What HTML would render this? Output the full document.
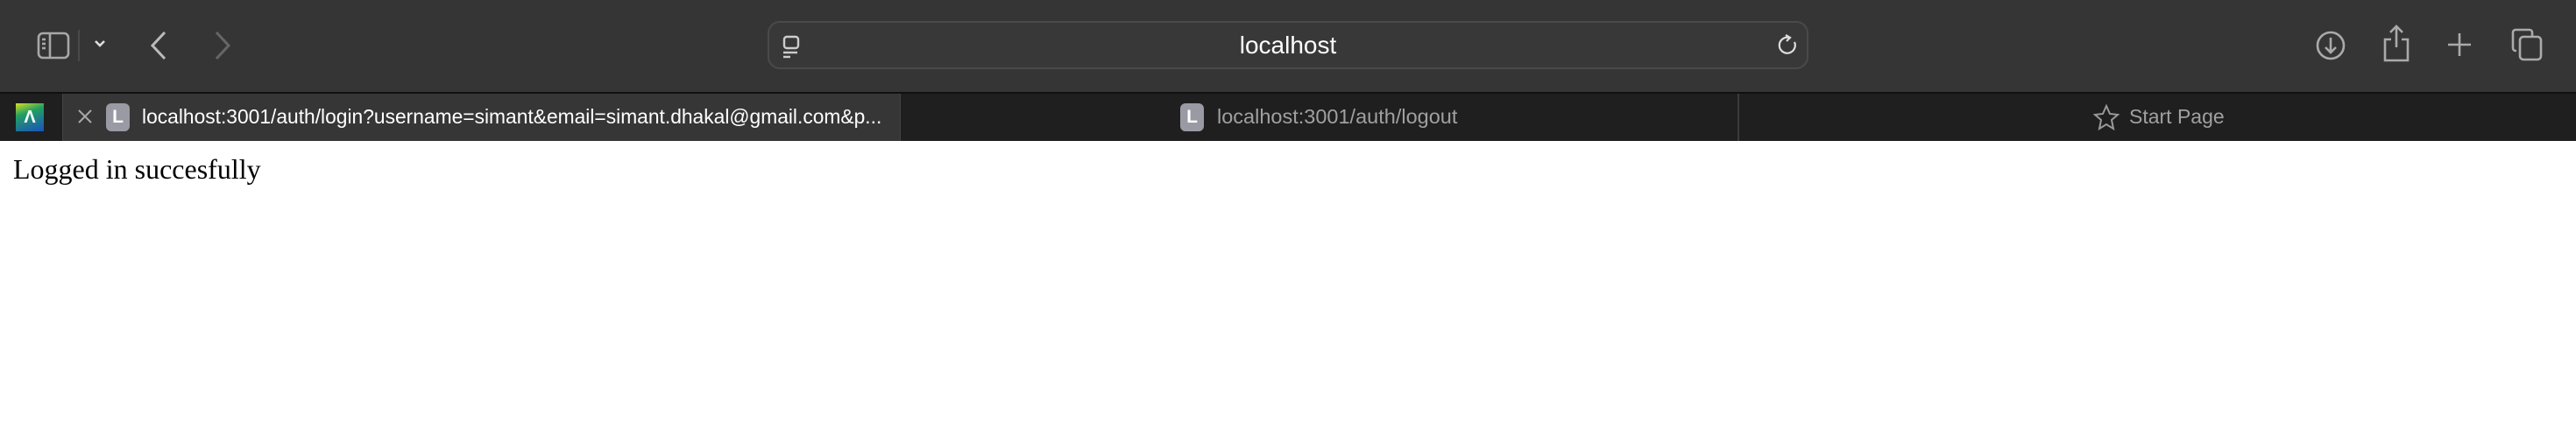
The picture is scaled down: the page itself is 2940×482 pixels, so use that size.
<!DOCTYPE html>
<html><head><meta charset="utf-8"><style>
*{margin:0;padding:0;box-sizing:border-box}
body{width:2940px;height:482px;background:#fff;position:relative;overflow:hidden;font-family:"Liberation Sans",sans-serif}
.tb{position:absolute;left:0;top:0;width:2940px;height:105px;background:#353535}
.tabs{position:absolute;left:0;top:105px;width:2940px;height:56px;background:#1f1f1f;border-top:2px solid #111}
.ab{position:absolute;left:876px;top:24px;width:1188px;height:55px;border-radius:14px;background:#383838;border:2px solid #4a4a4a}
.abt{position:absolute;left:0;width:100%;top:10px;text-align:center;color:#fff;font-size:28px}
svg{position:absolute}
.act{position:absolute;left:71px;top:0;width:957px;height:54px;background:#363636;border-left:1px solid #444;border-right:1px solid #444}
.t{position:absolute;font-size:23px;white-space:nowrap}
.L{position:absolute;width:27px;height:32px;border-radius:6px;background:#9a9aa5;color:#fff;font-size:21px;font-weight:bold;text-align:center;line-height:32px}
</style></head><body>
<div class="tb">
<svg style="left:42px;top:36px" width="38" height="32" viewBox="0 0 38 32" fill="none" stroke="#a8a8a8" stroke-width="2.6"><rect x="2" y="2" width="34" height="28" rx="5"/><line x1="15" y1="2" x2="15" y2="30"/><line x1="6" y1="9" x2="10" y2="9"/><line x1="6" y1="14" x2="10" y2="14"/><line x1="6" y1="19" x2="10" y2="19"/></svg>
<div style="position:absolute;left:89px;top:34px;width:2px;height:36px;background:#4a4a4a"></div>
<svg style="left:107px;top:45px" width="14" height="10" viewBox="0 0 14 10" fill="none" stroke="#ddd" stroke-width="2.6"><path d="M2 2l5 5 5-5"/></svg>
<svg style="left:170px;top:35px" width="22" height="34" viewBox="0 0 22 34" fill="none" stroke="#bbb" stroke-width="3"><path d="M18 2L4 17l14 15"/></svg>
<svg style="left:243px;top:35px" width="22" height="34" viewBox="0 0 22 34" fill="none" stroke="#666" stroke-width="3"><path d="M4 2l14 15L4 32"/></svg>
<div class="ab"><svg style="left:14px;top:14px" width="24" height="28" viewBox="0 0 24 28" fill="none" stroke="#ccc" stroke-width="2.4"><rect x="3" y="2" width="16" height="13" rx="3"/><line x1="2" y1="20" x2="18" y2="20"/><line x1="2" y1="25" x2="10" y2="25"/></svg>
<div class="abt">localhost</div>
<svg style="left:1150px;top:12px" width="24" height="30" viewBox="0 0 24 30" fill="none" stroke="#ddd" stroke-width="2.2"><path d="M14 5A9 9 0 1 0 20 10"/><path d="M10 2l5 3-4 4"/></svg></div>
<svg style="left:2642px;top:34px" width="36" height="36" viewBox="0 0 36 36" fill="none" stroke="#aaa" stroke-width="2.6"><circle cx="18" cy="18" r="15"/><path d="M18 9v17M12 20l6 6 6-6"/></svg>
<svg style="left:2718px;top:28px" width="34" height="44" viewBox="0 0 34 44" fill="none" stroke="#aaa" stroke-width="2.6"><path d="M17 2v24M10 9l7-7 7 7M11 17H4v24h26V17h-7"/></svg>
<svg style="left:2792px;top:36px" width="30" height="30" viewBox="0 0 30 30" fill="none" stroke="#aaa" stroke-width="2.6"><path d="M15 2v26M2 15h26"/></svg>
<svg style="left:2866px;top:32px" width="38" height="38" viewBox="0 0 38 38" fill="none" stroke="#aaa" stroke-width="2.6"><rect x="10" y="10" width="24" height="26" rx="4"/><path d="M6 26H5a3 3 0 0 1-3-3V5a3 3 0 0 1 3-3h16a3 3 0 0 1 3 3v5"/></svg>
</div>
<div class="tabs">
<div style="position:absolute;left:18px;top:11px;width:32px;height:32px;background:linear-gradient(160deg,#d8e020 0%,#22a060 35%,#1a50c0 100%);color:#fff;font-size:20px;font-weight:bold;text-align:center;line-height:32px">Λ</div>
<div class="act">
<svg style="left:16px;top:17px" width="18" height="18" viewBox="0 0 18 18" stroke="#aaa" stroke-width="2"><path d="M2 2l14 14M16 2L2 16"/></svg>
<div class="L" style="left:49px;top:11px">L</div>
<div class="t" style="left:90px;top:13px;color:#fff;font-size:22.8px">localhost:3001/auth/login?username=simant&amp;email=simant.dhakal@gmail.com&amp;p...</div>
</div>
<div class="L" style="left:1347px;top:11px">L</div>
<div class="t" style="left:1389px;top:13px;color:#a0a0a0;font-size:23.5px">localhost:3001/auth/logout</div>
<div style="position:absolute;left:1983px;top:0;width:2px;height:54px;background:#3a3a3a"></div>
<svg style="left:2389px;top:12px" width="30" height="30" viewBox="0 0 30 30" fill="none" stroke="#999" stroke-width="2"><path d="M15 2l4 9 9 1-7 6 2 10-8-5-8 5 2-10-7-6 9-1z"/></svg>
<div class="t" style="left:2430px;top:13px;color:#a0a0a0">Start Page</div>
</div>
<div style="position:absolute;left:15px;top:175px;font-family:'Liberation Serif',serif;font-size:32px;color:#000">Logged in succesfully</div>
</body></html>
